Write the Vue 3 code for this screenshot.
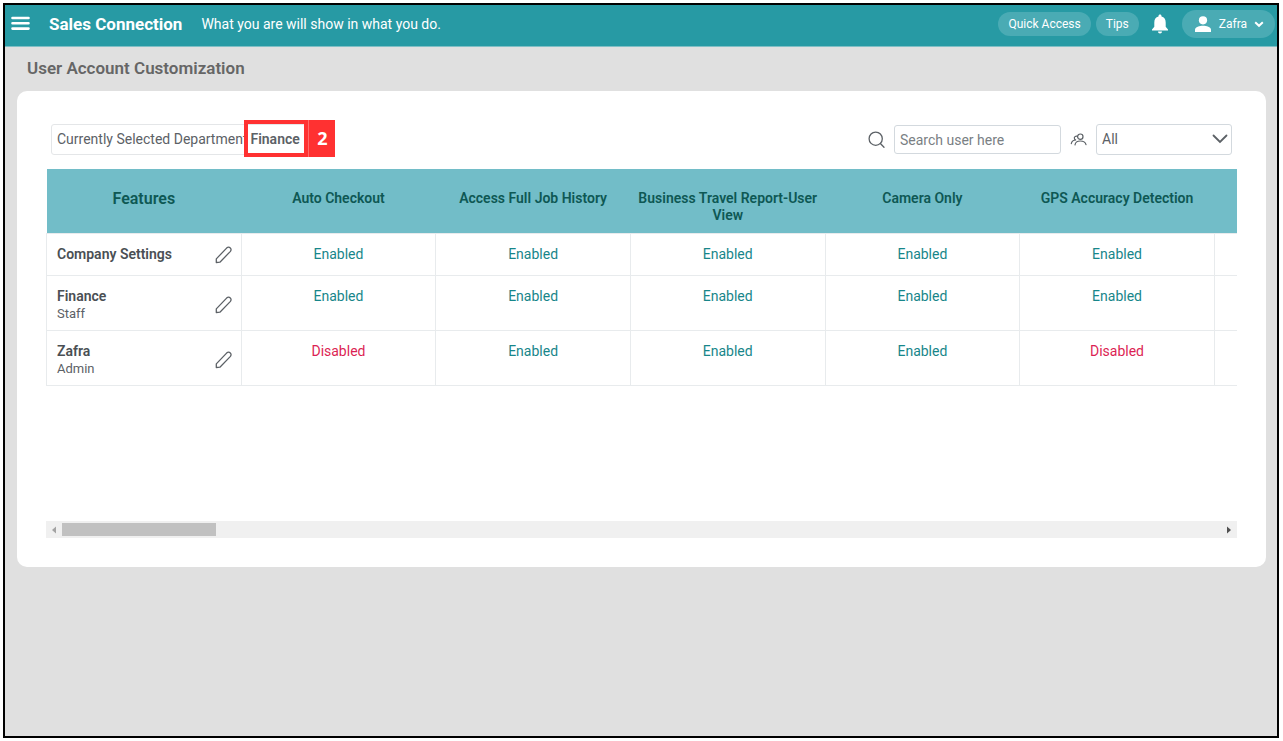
<script setup>
import { ref } from 'vue'

const search = ref('')
const group = ref('All')

const features = [
  'Auto Checkout',
  'Access Full Job History',
  'Business Travel Report-User View',
  'Camera Only',
  'GPS Accuracy Detection',
]

const rows = [
  { name: 'Company Settings', role: '', values: [true, true, true, true, true] },
  { name: 'Finance', role: 'Staff', values: [true, true, true, true, true] },
  { name: 'Zafra', role: 'Admin', values: [false, true, true, true, false] },
]
</script>

<template>
  <div class="page">
    <div class="frame">
      <header class="topbar">
        <button class="plain menu" type="button" aria-label="Menu">
          <svg width="19" height="16" viewBox="0 0 19 16" fill="none" stroke="#fff" stroke-width="2.600" stroke-linecap="round">
            <path d="M1.500 2h16M1.500 7.300h16M1.500 12.600h16" />
          </svg>
        </button>
        <strong class="brand">Sales Connection</strong>
        <span class="slogan">What you are will show in what you do.</span>
        <nav class="actions">
          <button class="pill" type="button">Quick Access</button>
          <button class="pill tips" type="button">Tips</button>
          <button class="plain bell" type="button" aria-label="Notifications">
            <svg width="18" height="20" viewBox="0 0 18 20" fill="#fff">
              <path d="M9 0.500c.9 0 1.500.6 1.500 1.500v.6C13.300 3.300 14.700 5.500 14.700 8.500v4.300l2.300 2.600v1H1v-1l2.300-2.600V8.500c0-3 1.400-5.200 4.200-5.900V2C7.500 1.100 8.100.5 9 .5z" />
              <path d="M7 17.500h4c0 1.200-.8 2-2 2s-2-.8-2-2z" />
            </svg>
          </button>
          <button class="pill user" type="button">
            <svg width="18" height="16" viewBox="0 0 18 16" fill="#fff">
              <circle cx="9" cy="4.300" r="4.100" />
              <path d="M1 16v-2.300c0-2.500 4.600-3.900 8-3.900s8 1.400 8 3.900V16z" />
            </svg>
            <span>Zafra</span>
            <svg width="10" height="7" viewBox="0 0 10 7" fill="none" stroke="#fff" stroke-width="2">
              <path d="M1.200 1.200L5 4.800l3.800-3.600" />
            </svg>
          </button>
        </nav>
      </header>

      <h1>User Account Customization</h1>

      <main class="card">
        <div class="toolbar">
          <div class="department">
            <span>Currently Selected Department</span>
            <strong class="selected">Finance<span class="marker"><span class="outline"></span><span class="number">2</span></span></strong>
          </div>
          <div class="filters">
            <label for="search" aria-label="Search user">
              <svg width="18" height="18" viewBox="0 0 18 18" fill="none" stroke="#5c6166" stroke-width="1.300" stroke-linecap="round">
                <circle cx="8.700" cy="7.700" r="6.600" />
                <path d="M13.400 12.500L17 16.300" />
              </svg>
            </label>
            <input id="search" v-model="search" type="text" placeholder="Search user here" />
            <label for="group" aria-label="User group">
              <svg width="17" height="14" viewBox="0 0 17 14" fill="none" stroke="#5c6166" stroke-width="1.200" stroke-linecap="round">
                <circle cx="10.300" cy="3.700" r="2.700" />
                <path d="M5 11.800c.4-2.400 2.600-3.800 5.300-3.800 3 0 5.100 1.300 5.700 3.600" />
                <path d="M7 3.200C5.400 3 4.300 3.900 4.300 5.100c0 1.100.8 1.800 1.800 1.900C3.500 7 1.700 8.500 1.300 10.600" />
              </svg>
            </label>
            <div class="select">
              <select id="group" v-model="group">
                <option>All</option>
              </select>
              <svg width="16" height="10" viewBox="0 0 16 10" fill="none" stroke="#5c6166" stroke-width="1.800" stroke-linecap="round">
                <path d="M1.500 1.500L8 8l6.500-6.500" />
              </svg>
            </div>
          </div>
        </div>

        <div class="grid">
          <table>
            <thead>
              <tr>
                <th class="first" scope="col">Features</th>
                <th v-for="f in features" :key="f" scope="col">{{ f }}</th>
                <td class="rest"></td>
              </tr>
            </thead>
            <tbody>
              <tr v-for="row in rows" :key="row.name">
                <th scope="row">
                  <div class="who">
                    <div>
                      <div class="name">{{ row.name }}</div>
                      <div v-if="row.role" class="role">{{ row.role }}</div>
                    </div>
                    <button class="plain" type="button" :aria-label="'Edit ' + row.name">
                      <svg width="18" height="18" viewBox="0 0 18 18" fill="none" stroke="#5c6166" stroke-width="1.300" stroke-linejoin="round">
                        <path d="M1.300 16.500v-3.600L11.600 2.100c1.200-1.100 2.700-1.100 3.700-.2s1 2.500-.1 3.700L4.900 16.200z" />
                      </svg>
                    </button>
                  </div>
                </th>
                <td v-for="(on, i) in row.values" :key="i" :class="{ off: !on }">
                  {{ on ? 'Enabled' : 'Disabled' }}
                </td>
                <td></td>
              </tr>
            </tbody>
          </table>
          <div class="scrollbar" aria-hidden="true">
            <svg width="16" height="16" viewBox="0 0 16 16" fill="#a3a3a3"><path d="M10 4.500v7L6 8z" /></svg>
            <div class="track"><div class="thumb"></div></div>
            <svg width="16" height="16" viewBox="0 0 16 16" fill="#505050"><path d="M6 4.500v7L10 8z" /></svg>
          </div>
        </div>
      </main>
    </div>
  </div>
</template>

<style>
body {
  margin: 0;
  background: #fff;
}
</style>

<style scoped>
.page,
.page * {
  box-sizing: border-box;
}
.page {
  display: flex;
  min-height: 100vh;
  padding: 3px 4px 3px 3px;
  font-family: Roboto, "Liberation Sans", sans-serif;
  font-size: 14px;
  line-height: 17px;
  color: #5c6166;
}
.frame {
  flex: 1;
  min-width: 0;
  border: 2px solid #000;
  background: #e0e0e0;
}
button,
input,
select {
  font: inherit;
  color: inherit;
}
.plain {
  display: flex;
  padding: 0;
  border: 0;
  background: none;
}
.topbar {
  display: flex;
  align-items: center;
  height: 42px;
  padding: 0 2px 3px 6px;
  border-bottom: 1px solid #7fbfc5;
  background: #279aa4;
  color: #fff;
}
.brand {
  margin-left: 19px;
  font-size: 17px;
}
.slogan {
  margin-left: 19px;
}
.actions {
  display: flex;
  align-items: center;
  margin-left: auto;
}
.pill {
  height: 24px;
  padding: 0 10px;
  border: 0;
  border-radius: 14px;
  background: #4aabb4;
  color: #fff;
  font-size: 12px;
}
.tips {
  margin-left: 5px;
}
.bell {
  margin: 0 13px 0 12px;
}
.user {
  display: flex;
  align-items: center;
  gap: 7px;
  height: 28px;
  padding: 0 11px 0 12px;
}
h1 {
  margin: 11px 22px 13px;
  font-size: 17px;
  line-height: 20px;
  font-weight: 600;
  color: #666;
}
.card {
  margin: 0 11px 0 12px;
  padding: 30px 29px 29px;
  border-radius: 10px;
  background: #fff;
}
.toolbar {
  display: flex;
  align-items: center;
  justify-content: space-between;
  padding: 3px 5px 14px;
}
.department {
  display: flex;
  align-items: center;
  gap: 3px;
  height: 31px;
  padding: 0 5px;
  border: 1px solid #e4e6e8;
  border-radius: 3px;
}
.selected {
  position: relative;
  font-weight: 600;
}
.marker {
  position: absolute;
  top: -11px;
  left: -6px;
  display: flex;
  height: 37px;
}
.outline {
  width: 64px;
  border: 4px solid #ff3131;
}
.number {
  display: flex;
  align-items: center;
  justify-content: center;
  width: 27px;
  border-left: 1px solid #ff6b6b;
  background: #ff3131;
  color: #fff;
  font-family: "Open Sans", sans-serif;
  font-size: 18px;
  font-weight: 700;
}
.filters {
  display: flex;
  align-items: center;
  gap: 9px;
}
.filters label {
  display: flex;
}
input,
select {
  padding: 0 5px;
  border: 1px solid #d3d9de;
  border-radius: 3px;
  background: #fff;
}
input {
  width: 167px;
  height: 29px;
}
input::placeholder {
  color: #7a7f84;
  opacity: 1;
}
.select {
  position: relative;
}
select {
  display: block;
  width: 136px;
  height: 31px;
  appearance: none;
}
.select svg {
  position: absolute;
  top: 10px;
  right: 4px;
  pointer-events: none;
}
.grid {
  display: flex;
  flex-direction: column;
  justify-content: space-between;
  min-height: 369px;
}
table {
  width: 100%;
  table-layout: fixed;
  border-collapse: collapse;
}
thead {
  background: #72bdc8;
  color: #0e5854;
}
thead th {
  width: 16.35%;
  height: 64px;
  padding: 21px 5px 0;
  font-weight: 600;
  vertical-align: top;
}
thead .first {
  font-size: 16px;
}
tbody tr {
  height: 42px;
}
tbody th,
tbody td {
  border: 1px solid #e8ebed;
  padding: 12px 8px 8px;
  vertical-align: top;
  text-align: center;
  color: #17868a;
}
tbody th {
  padding-left: 10px;
  text-align: left;
  font-weight: 400;
  color: #5c6166;
}
tbody td:last-child {
  border-right: 0;
}
tbody .off {
  color: #dc1f54;
}
.who {
  display: flex;
  align-items: center;
  justify-content: space-between;
}
.name {
  font-weight: 600;
  color: #4a4f54;
}
.role {
  font-size: 13px;
}
.scrollbar {
  display: flex;
  align-items: center;
  height: 17px;
  background: #f0f0f0;
}
.track {
  flex: 1;
}
.thumb {
  width: 13.3%;
  height: 13px;
  background: #c1c1c1;
}
</style>
